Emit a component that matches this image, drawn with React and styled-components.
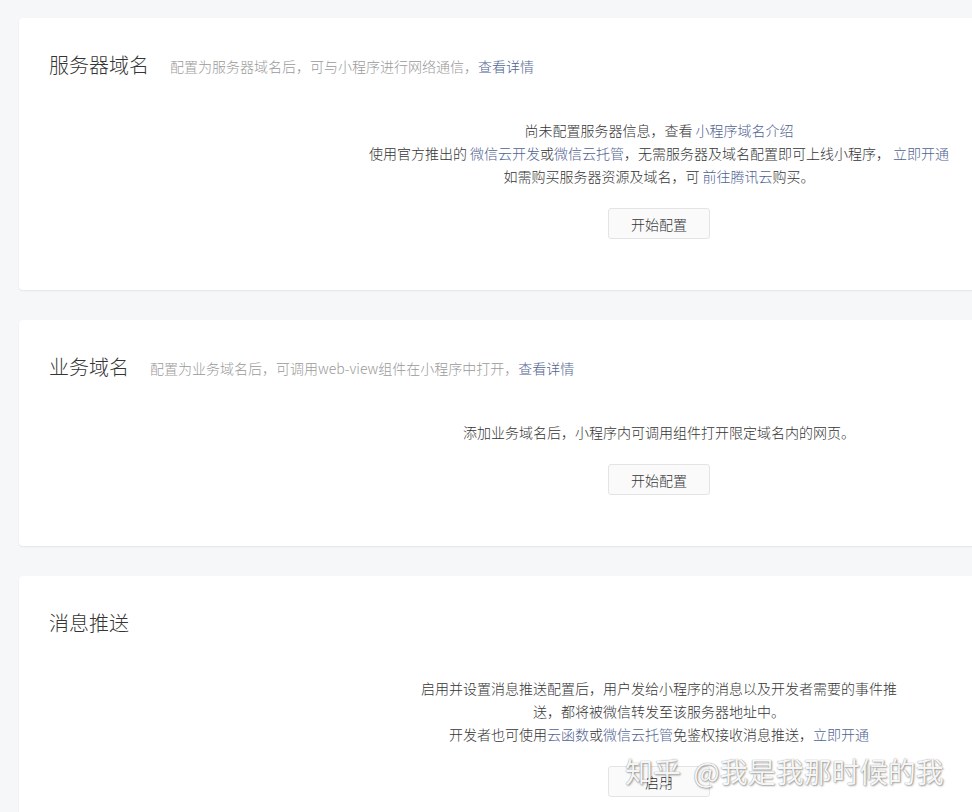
import React from "react"
import styled, { createGlobalStyle } from "styled-components"

const GlobalStyle = createGlobalStyle`
  html, body {
    margin: 0;
    padding: 0;
    background: #f6f7f9;
    overflow: hidden;
  }
  body {
    font-family: "Noto Sans CJK SC", "Noto Sans", sans-serif;
    color: #353535;
  }
`

const Page = styled.div`
  position: relative;
  width: 100%;
  height: 812px;
  overflow: hidden;
  padding: 18px 0 0 19px;
  box-sizing: border-box;
  display: flex;
  flex-direction: column;
  gap: 30px;
`

const Card = styled.section`
  width: 1280px;
  flex-shrink: 0;
  background: #fff;
  border-radius: 4px;
  box-shadow: 0 1px 2px rgba(0, 0, 0, 0.08);
  padding: 33px 30px 51px;
  box-sizing: border-box;
`

const Header = styled.div`
  display: flex;
  align-items: center;
  gap: 21px;
  height: 28px;
`

const Title = styled.h2`
  margin: 0;
  font-size: 20px;
  font-weight: 300;
  line-height: 28px;
  color: #353535;
`

const Desc = styled.span`
  font-size: 14px;
  font-weight: 300;
  color: #9a9a9a;
  margin-top: 2px;
`

const Link = styled.a`
  color: #4f6391;
  text-decoration: none;
  cursor: pointer;
`

const Body = styled.div`
  margin-top: 40px;
  display: flex;
  flex-direction: column;
  align-items: center;
  gap: 20px;
`

const Text = styled.div`
  font-size: 14px;
  font-weight: 300;
  line-height: 23px;
  text-align: center;
  color: #353535;
  max-width: ${(p) => p.$maxWidth || "none"};
`

const Button = styled.button`
  width: 102px;
  height: 31px;
  border: 1px solid #e4e4e4;
  border-radius: 3px;
  background: #fafafa;
  font-family: inherit;
  font-size: 14px;
  font-weight: 300;
  color: #353535;
  cursor: pointer;
`

const Watermark = styled.div`
  position: absolute;
  left: 625px;
  top: 752px;
  font-size: 28px;
  line-height: 38px;
  word-spacing: 6px;
  color: rgba(255, 255, 255, 0.95);
  text-shadow: 0 0 1px rgba(0, 0, 0, 0.5), 1px 1px 2px rgba(0, 0, 0, 0.35);
  white-space: nowrap;
  pointer-events: none;
`

export default function App() {
  return (
    <>
      <GlobalStyle />
      <Page>
        <Card>
          <Header>
            <Title>服务器域名</Title>
            <Desc>
              配置为服务器域名后，可与小程序进行网络通信，<Link>查看详情</Link>
            </Desc>
          </Header>
          <Body>
            <Text>
              尚未配置服务器信息，查看 <Link>小程序域名介绍</Link>
              <br />
              使用官方推出的 <Link>微信云开发</Link>或<Link>微信云托管</Link>
              ，无需服务器及域名配置即可上线小程序， <Link>立即开通</Link>
              <br />
              如需购买服务器资源及域名，可 <Link>前往腾讯云</Link>购买。
            </Text>
            <Button>开始配置</Button>
          </Body>
        </Card>

        <Card>
          <Header>
            <Title>业务域名</Title>
            <Desc>
              配置为业务域名后，可调用web-view组件在小程序中打开，<Link>查看详情</Link>
            </Desc>
          </Header>
          <Body>
            <Text>添加业务域名后，小程序内可调用组件打开限定域名内的网页。</Text>
            <Button>开始配置</Button>
          </Body>
        </Card>

        <Card>
          <Header>
            <Title>消息推送</Title>
          </Header>
          <Body>
            <Text $maxWidth="482px">
              启用并设置消息推送配置后，用户发给小程序的消息以及开发者需要的事件推送，都将被微信转发至该服务器地址中。
              <br />
              开发者也可使用<Link>云函数</Link>或<Link>微信云托管</Link>免鉴权接收消息推送，<Link>立即开通</Link>
            </Text>
            <Button>启用</Button>
          </Body>
        </Card>

        <Watermark>知乎 @我是我那时候的我</Watermark>
      </Page>
    </>
  )
}
